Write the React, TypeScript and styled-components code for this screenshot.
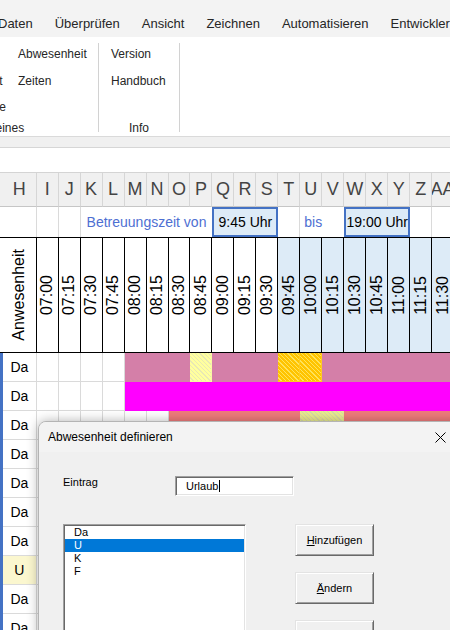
import React from "react";
import styled, { createGlobalStyle } from "styled-components";

const GlobalStyle = createGlobalStyle`
  html, body { margin: 0; padding: 0; }
  body {
    width: 450px;
    height: 630px;
    overflow: hidden;
    background: #fff;
    font-family: "Liberation Sans", Arial, sans-serif;
  }
`;

const Screen = styled.div`
  position: relative;
  width: 450px;
  height: 630px;
  overflow: hidden;
  display: flex;
  flex-direction: column;
  background: #fff;
`;

/* ---------- tabs ---------- */
const TabBar = styled.div`
  flex: none;
  height: 37px;
  background: #f3f3f3;
  display: flex;
  align-items: center;
  padding-top: 9px;
  box-sizing: border-box;
  overflow: hidden;
`;

const TabList = styled.div`
  display: flex;
  gap: 22px;
  margin-left: -2px;
  white-space: nowrap;
`;

const Tab = styled.span`
  font-size: 13px;
  color: #262626;
`;

/* ---------- ribbon ---------- */
const Ribbon = styled.div`
  flex: none;
  height: 100px;
  background: #fff;
  border-bottom: 1px solid #dadada;
  display: flex;
  overflow: hidden;
  box-sizing: border-box;
  padding-top: 4px;
`;

const Group = styled.div<{ $width: number; $offset?: number }>`
  flex: none;
  width: ${(p) => p.$width}px;
  margin-left: ${(p) => p.$offset ?? 0}px;
  display: flex;
  flex-direction: column;
`;

const Controls = styled.div<{ $pad: number }>`
  height: 79.5px;
  display: flex;
  padding-left: ${(p) => p.$pad}px;
`;

const ControlColumn = styled.div<{ $width?: number }>`
  flex: none;
  width: ${(p) => (p.$width ? `${p.$width}px` : "auto")};
  display: flex;
  flex-direction: column;
`;

const RibbonItem = styled.div`
  height: 26.5px;
  line-height: 26.5px;
  font-size: 12px;
  color: #262626;
  white-space: nowrap;
`;

const GroupLabel = styled.div`
  height: 15.5px;
  line-height: 15.5px;
  text-align: center;
  font-size: 12px;
  color: #262626;
  white-space: nowrap;
`;

const Separator = styled.div`
  flex: none;
  width: 1px;
  background: #d2d2d2;
  margin: 2px 0 4px;
`;

const Band = styled.div`
  flex: none;
  height: 10px;
  background: #f0f0f0;
  border-bottom: 1px solid #d6d6d6;
`;

const FormulaArea = styled.div`
  flex: none;
  height: 25px;
  background: #fff;
  border-bottom: 1px solid #d4d4d4;
  box-sizing: border-box;
`;

/* ---------- sheet ---------- */
const Sheet = styled.div`
  flex: none;
  display: grid;
  grid-template-columns: 3px 33.7px repeat(19, 21.97px);
  grid-template-rows: 34px 30px 116px repeat(10, 29px);
  width: 454px;
`;

const Stub = styled.div<{ $tone: "head" | "plain" | "sel" }>`
  box-sizing: border-box;
  background: ${(p) =>
    p.$tone === "head" ? "#f0f0f0" : p.$tone === "sel" ? "#4472c4" : "#fff"};
  border-bottom: ${(p) => (p.$tone === "head" ? "1px solid #c6c6c6" : "none")};
`;

const HeadCell = styled.div`
  box-sizing: border-box;
  background: #f0f0f0;
  border-right: 1px solid #d6d6d6;
  border-bottom: 1px solid #c6c6c6;
  display: flex;
  align-items: center;
  justify-content: center;
  font-size: 18px;
  color: #444;
  white-space: nowrap;
  overflow: hidden;
`;

const InfoCell = styled.div<{ $span?: number; $align?: "left" | "right"; $line?: boolean }>`
  grid-column: span ${(p) => p.$span ?? 1};
  box-sizing: border-box;
  background: #fff;
  border-right: ${(p) => (p.$line ? "1px solid #dadada" : "none")};
  display: flex;
  align-items: center;
  justify-content: ${(p) => (p.$align === "left" ? "flex-start" : "flex-end")};
  padding: ${(p) => (p.$align === "left" ? "0 0 0 4px" : "0 6px 0 0")};
  font-size: 14px;
  color: #4e6fd2;
  white-space: nowrap;
`;

const TimeBox = styled.div`
  grid-column: span 3;
  box-sizing: border-box;
  background: #ddebf7;
  border: 2px solid #4472c4;
  display: flex;
  align-items: center;
  justify-content: center;
  font-size: 14px;
  color: #000;
  white-space: nowrap;
`;

const TitleCell = styled.div<{ $shaded?: boolean }>`
  box-sizing: border-box;
  background: ${(p) => (p.$shaded ? "#ddebf7" : "#fff")};
  border-top: 1px solid #000;
  border-right: 1px solid #000;
  border-bottom: 1px solid #000;
  display: flex;
  align-items: center;
  justify-content: center;
  overflow: hidden;
`;

const TitleStubCell = styled.div`
  box-sizing: border-box;
  background: #fff;
  border-top: 1px solid #000;
  border-bottom: 1px solid #000;
`;

const Vertical = styled.span`
  writing-mode: vertical-rl;
  transform: rotate(180deg);
  font-size: 16px;
  color: #000;
  white-space: nowrap;
`;

type Fill = "none" | "pink" | "magenta" | "salmon" | "hatchOrange" | "hatchPale" | "hatchLime";

const fills: Record<Fill, string> = {
  none: "background: #fff; border-right-color: #dadada; border-bottom-color: #dadada;",
  pink: "background: #d47fa8; border-color: #d47fa8;",
  magenta: "background: #ff00ff; border-color: #ff00ff;",
  salmon: "background: #f07c7c; border-color: #f07c7c;",
  hatchOrange:
    "background: repeating-linear-gradient(45deg, #ffc400 0 2px, #ffe35c 2px 3px); border-color: #ffcc22;",
  hatchPale:
    "background: repeating-linear-gradient(45deg, #ffff9e 0 2px, #e8e8b4 2px 3px); border-color: #f8f8a6;",
  hatchLime:
    "background: repeating-linear-gradient(45deg, #ecee8e 0 2px, #d9dca6 2px 3px); border-color: #e6e894;",
};

const DataCell = styled.div<{ $fill: Fill }>`
  box-sizing: border-box;
  border-right: 1px solid;
  border-bottom: 1px solid;
  ${(p) => fills[p.$fill]}
`;

const NameCell = styled.div<{ $marked?: boolean }>`
  box-sizing: border-box;
  background: ${(p) => (p.$marked ? "#fbf7cf" : "#fff")};
  border-right: 1px solid #dadada;
  border-bottom: 1px solid #dadada;
  display: flex;
  align-items: center;
  justify-content: center;
  font-size: 14px;
  color: #000;
`;

/* ---------- dialog ---------- */
const Dialog = styled.div`
  position: absolute;
  left: 38px;
  top: 421px;
  width: 426px;
  height: 240px;
  box-sizing: border-box;
  background: #f0f0f0;
  border: 1px solid #b4b4b4;
  border-top-left-radius: 8px;
  box-shadow: 0 0 12px rgba(0, 0, 0, 0.3);
  overflow: hidden;
  display: flex;
  flex-direction: column;
`;

const DialogTitleBar = styled.div`
  flex: none;
  height: 30px;
  background: #f3f3f3;
  display: flex;
  align-items: center;
  padding-left: 9px;
`;

const DialogTitle = styled.span`
  flex: 1;
  font-size: 12px;
  color: #000;
  white-space: nowrap;
`;

const CloseButton = styled.div`
  flex: none;
  width: 46px;
  height: 30px;
  display: flex;
  align-items: center;
  justify-content: center;
`;

const DialogBody = styled.div`
  flex: 1;
  padding: 24px 0 0 24px;
  font-size: 11px;
  color: #000;
`;

const FieldRow = styled.div`
  display: flex;
  align-items: flex-start;
`;

const FieldLabel = styled.div`
  flex: none;
  width: 112px;
  line-height: 13px;
`;

const TextBox = styled.div`
  flex: none;
  width: 119px;
  height: 20px;
  box-sizing: border-box;
  background: #fff;
  border-top: 1px solid #a0a0a0;
  border-left: 1px solid #a0a0a0;
  border-right: 1px solid #fff;
  border-bottom: 1px solid #fff;
  box-shadow: inset 1px 1px 0 #696969, inset -1px -1px 0 #e3e3e3;
  display: flex;
  align-items: center;
  padding-left: 10px;
  white-space: nowrap;
`;

const Caret = styled.span`
  display: inline-block;
  width: 1px;
  height: 12px;
  background: #000;
  margin-left: 1px;
`;

const ListRow = styled.div`
  display: flex;
  gap: 49px;
  margin-top: 28px;
`;

const ListBox = styled.div`
  flex: none;
  width: 183px;
  height: 130px;
  box-sizing: border-box;
  background: #fff;
  border-top: 1px solid #a0a0a0;
  border-left: 1px solid #a0a0a0;
  border-right: 1px solid #fff;
  border-bottom: 1px solid #fff;
  box-shadow: inset 1px 1px 0 #696969, inset -1px -1px 0 #e3e3e3;
  padding: 1px 1px 0 1px;
`;

const ListItem = styled.div<{ $selected?: boolean }>`
  height: 13px;
  line-height: 13px;
  padding-left: 9px;
  background: ${(p) => (p.$selected ? "#0078d7" : "transparent")};
  color: ${(p) => (p.$selected ? "#fff" : "#000")};
`;

const ButtonColumn = styled.div`
  flex: none;
  display: flex;
  flex-direction: column;
  gap: 16px;
`;

const PushButton = styled.div`
  width: 79px;
  height: 32px;
  box-sizing: border-box;
  background: #f0f0f0;
  border-top: 1px solid #e3e3e3;
  border-left: 1px solid #e3e3e3;
  border-right: 1px solid #696969;
  border-bottom: 1px solid #696969;
  box-shadow: inset 1px 1px 0 #fff, inset -1px -1px 0 #a0a0a0;
  display: flex;
  align-items: center;
  justify-content: center;
  font-size: 11px;
`;

const Accel = styled.span`
  text-decoration: underline;
`;

/* ---------- data ---------- */
const COLS = ["I", "J", "K", "L", "M", "N", "O", "P", "Q", "R", "S", "T", "U", "V", "W", "X", "Y", "Z", "AA"];
const TIMES = [
  "07:00", "07:15", "07:30", "07:45", "08:00", "08:15", "08:30", "08:45", "09:00", "09:15",
  "09:30", "09:45", "10:00", "10:15", "10:30", "10:45", "11:00", "11:15", "11:30",
];

const rowFills = (spec: [number, number, Fill][]): Fill[] => {
  const out: Fill[] = COLS.map(() => "none");
  spec.forEach(([a, b, f]) => {
    for (let i = a; i <= b; i++) out[i] = f;
  });
  return out;
};

const ROWS: { label: string; marked?: boolean; fills: Fill[] }[] = [
  { label: "Da", fills: rowFills([[4, 6, "pink"], [7, 7, "hatchPale"], [8, 10, "pink"], [11, 12, "hatchOrange"], [13, 18, "pink"]]) },
  { label: "Da", fills: rowFills([[4, 18, "magenta"]]) },
  { label: "Da", fills: rowFills([[6, 11, "salmon"], [12, 13, "hatchLime"], [14, 18, "salmon"]]) },
  { label: "Da", fills: rowFills([]) },
  { label: "Da", fills: rowFills([]) },
  { label: "Da", fills: rowFills([]) },
  { label: "Da", fills: rowFills([]) },
  { label: "U", marked: true, fills: rowFills([]) },
  { label: "Da", fills: rowFills([]) },
  { label: "Da", fills: rowFills([]) },
];

const TABS = ["Daten", "Überprüfen", "Ansicht", "Zeichnen", "Automatisieren", "Entwickler"];

export default function App() {
  return (
    <>
      <GlobalStyle />
      <Screen>
        <TabBar>
          <TabList>
            {TABS.map((t) => (
              <Tab key={t}>{t}</Tab>
            ))}
          </TabList>
        </TabBar>

        <Ribbon>
          <Group $width={213} $offset={-115}>
            <Controls $pad={83}>
              <ControlColumn $width={50}>
                <RibbonItem>&nbsp;</RibbonItem>
                <RibbonItem>Export</RibbonItem>
                <RibbonItem>Tabelle</RibbonItem>
              </ControlColumn>
              <ControlColumn>
                <RibbonItem>Abwesenheit</RibbonItem>
                <RibbonItem>Zeiten</RibbonItem>
              </ControlColumn>
            </Controls>
            <GroupLabel>Allgemeines</GroupLabel>
          </Group>
          <Separator />
          <Group $width={80}>
            <Controls $pad={12}>
              <ControlColumn>
                <RibbonItem>Version</RibbonItem>
                <RibbonItem>Handbuch</RibbonItem>
              </ControlColumn>
            </Controls>
            <GroupLabel>Info</GroupLabel>
          </Group>
          <Separator />
        </Ribbon>
        <Band />
        <FormulaArea />

        <Sheet>
          {/* column letters */}
          <Stub $tone="head" />
          <HeadCell>H</HeadCell>
          {COLS.map((c) => (
            <HeadCell key={c}>{c}</HeadCell>
          ))}

          {/* row: Betreuungszeit */}
          <Stub $tone="plain" />
          <InfoCell $line />
          <InfoCell $line />
          <InfoCell $line />
          <InfoCell $span={6}>Betreuungszeit von</InfoCell>
          <TimeBox>9:45 Uhr</TimeBox>
          <InfoCell $line />
          <InfoCell $span={2} $align="left">bis</InfoCell>
          <TimeBox>19:00 Uhr</TimeBox>
          <InfoCell $line />
          <InfoCell $line />

          {/* row: titles */}
          <TitleStubCell />
          <TitleCell>
            <Vertical>Anwesenheit</Vertical>
          </TitleCell>
          {TIMES.map((t, i) => (
            <TitleCell key={t} $shaded={i >= 11}>
              <Vertical>{t}</Vertical>
            </TitleCell>
          ))}

          {/* data rows */}
          {ROWS.map((r, ri) => (
            <React.Fragment key={ri}>
              <Stub $tone="sel" />
              <NameCell $marked={r.marked}>{r.label}</NameCell>
              {r.fills.map((f, ci) => (
                <DataCell key={ci} $fill={f} />
              ))}
            </React.Fragment>
          ))}
        </Sheet>

        <Dialog>
          <DialogTitleBar>
            <DialogTitle>Abwesenheit definieren</DialogTitle>
            <CloseButton>
              <svg width="11" height="11" viewBox="0 0 11 11">
                <path d="M0.5 0.5 L10.5 10.5 M10.5 0.5 L0.5 10.5" stroke="#000" strokeWidth="1" fill="none" />
              </svg>
            </CloseButton>
          </DialogTitleBar>
          <DialogBody>
            <FieldRow>
              <FieldLabel>Eintrag</FieldLabel>
              <TextBox>
                Urlaub
                <Caret />
              </TextBox>
            </FieldRow>
            <ListRow>
              <ListBox>
                <ListItem>Da</ListItem>
                <ListItem $selected>U</ListItem>
                <ListItem>K</ListItem>
                <ListItem>F</ListItem>
              </ListBox>
              <ButtonColumn>
                <PushButton>
                  <Accel>H</Accel>inzufügen
                </PushButton>
                <PushButton>
                  <Accel>Ä</Accel>ndern
                </PushButton>
                <PushButton>
                  <Accel>L</Accel>öschen
                </PushButton>
              </ButtonColumn>
            </ListRow>
          </DialogBody>
        </Dialog>
      </Screen>
    </>
  );
}
